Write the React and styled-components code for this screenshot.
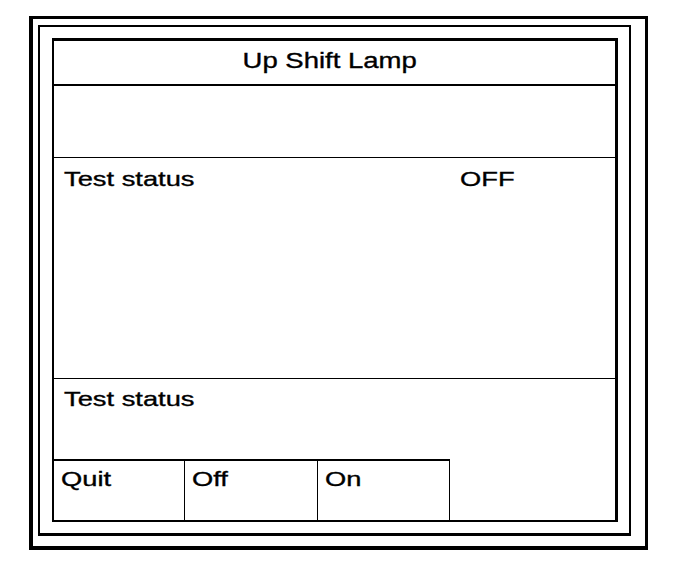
import React from 'react';
import styled, { createGlobalStyle } from 'styled-components';

const GlobalStyle = createGlobalStyle`
  html, body {
    margin: 0;
    padding: 0;
    background: #ffffff;
  }
  body {
    font-family: "Liberation Sans", Arial, sans-serif;
    color: #000000;
  }
  * {
    box-sizing: border-box;
  }
`;

const OuterFrame = styled.div`
  margin: 16px 0 0 29px;
  width: 619px;
  height: 534px;
  border: 3px solid #000;
  border-left-width: 4px;
  border-bottom-width: 4px;
  padding: 6px 14px 10px 5px;
  display: flex;
`;

const MiddleFrame = styled.div`
  flex: 1;
  border: 2px solid #000;
  border-bottom-width: 3px;
  padding: 11px 11px 11px 12px;
  display: flex;
`;

const Panel = styled.div`
  flex: 1;
  border: 2px solid #000;
  border-top-width: 3px;
  border-right-width: 3px;
  display: flex;
  flex-direction: column;
`;

const Section = styled.div`
  height: ${(p) => p.$height}px;
  padding: ${(p) => p.$padTop || 0}px 10px 0 10px;
  border-bottom: ${(p) => p.$line || 0}px solid #000;
  display: flex;
  align-items: flex-start;
`;

const Header = styled(Section)`
  justify-content: center;
  padding-right: 20px;
`;

// the reference font is drawn wider than Arial
const Text = styled.span`
  display: inline-block;
  font-size: ${(p) => p.$size || 21}px;
  line-height: 24px;
  white-space: nowrap;
  -webkit-text-stroke: 0.35px #000;
  transform: scaleX(${(p) => p.$stretch || 1.3});
  transform-origin: ${(p) => (p.$center ? 'center' : 'left')};
`;

const LabelCell = styled.div`
  width: 396px;
`;

const ButtonRow = styled.div`
  height: 61px;
  display: flex;
`;

const Button = styled.div`
  width: ${(p) => p.$width}px;
  border-top: 2px solid #000;
  border-right: 1px solid #000;
  padding: 6px 0 0 7px;
`;

const buttons = [
  { label: 'Quit', width: 131 },
  { label: 'Off', width: 133 },
  { label: 'On', width: 132 },
];

export default function App() {
  return (
    <>
      <GlobalStyle />
      <OuterFrame>
        <MiddleFrame>
          <Panel>
            <Header $height={45} $padTop={8} $line={2}>
              <Text $size={22} $stretch={1.25} $center>Up Shift Lamp</Text>
            </Header>
            <Section $height={72} $line={1} />
            <Section $height={221} $padTop={9} $line={1}>
              <LabelCell>
                <Text>Test status</Text>
              </LabelCell>
              <Text>OFF</Text>
            </Section>
            <Section $height={80} $padTop={8}>
              <Text>Test status</Text>
            </Section>
            <ButtonRow>
              {buttons.map((b) => (
                <Button key={b.label} $width={b.width}>
                  <Text>{b.label}</Text>
                </Button>
              ))}
            </ButtonRow>
          </Panel>
        </MiddleFrame>
      </OuterFrame>
    </>
  );
}
